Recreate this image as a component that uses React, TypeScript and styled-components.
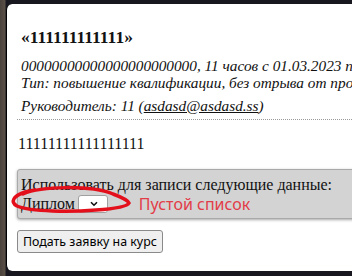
import React from "react";
import styled, { createGlobalStyle } from "styled-components";

const GlobalStyle = createGlobalStyle`
  html, body {
    margin: 0;
    width: 352px;
    height: 276px;
    overflow: hidden;
    background: #18171f;
  }
  body {
    font-family: "Liberation Serif", "Times New Roman", serif;
    color: #111;
  }
`;

const Backdrop = styled.div`
  height: 276px;
  padding: 4px 0 0 6px;
  box-sizing: border-box;
  background: linear-gradient(90deg, #4a423c 0, #5a5048 5px, transparent 6px), #18171f;
`;

const Modal = styled.div`
  width: 380px;
  height: 267px;
  box-sizing: border-box;
  padding: 22px 0 0 10px;
  background: #fff;
  border-left: 1px solid #000;
  border-radius: 6px;
  overflow: hidden;
`;

const Title = styled.h3`
  margin: 0 0 9px 4px;
  font-size: 17.5px;
  line-height: 22px;
  font-weight: bold;
`;

const Info = styled.div`
  padding: 0 0 5px 4px;
  border-bottom: 1px dotted #9a9a9a;
  font-style: italic;
  font-size: 15.3px;
  line-height: 17px;
  white-space: nowrap;
`;

const InfoLine = styled.div<{ $gap?: number }>`
  margin-top: ${(p) => p.$gap ?? 0}px;
`;

const Mail = styled.a`
  color: inherit;
  text-decoration: underline;
`;

const Description = styled.p`
  margin: 15px 0 16px 1px;
  font-size: 16px;
  line-height: 18px;
`;

const DataBox = styled.div`
  position: relative;
  padding: 6px 0 5px 3px;
  background: #d3d3d3;
  border: 1px solid #a9a9a9;
  border-radius: 3px;
  box-shadow: 0 1px 3px rgba(0, 0, 0, 0.35);
  font-size: 16px;
  line-height: 18px;
`;

const Row = styled.div`
  display: flex;
  align-items: center;
  gap: 3px;
  height: 19px;
`;

const SelectWrap = styled.span`
  position: relative;
  display: inline-block;
  width: 30px;
  height: 18px;
`;

const Select = styled.select`
  appearance: none;
  display: block;
  width: 100%;
  height: 100%;
  margin: 0;
  box-sizing: border-box;
  border: 1px solid #a0a0a0;
  border-radius: 3px;
  background: #fff;
`;

const Chevron = styled.svg`
  position: absolute;
  left: 12px;
  top: 6px;
  pointer-events: none;
`;

const Note = styled.span`
  margin-left: 28px;
  font-family: "Noto Sans", "Open Sans", sans-serif;
  font-size: 16px;
  color: #e23c48;
`;

const Scribble = styled.svg`
  position: absolute;
  left: -9px;
  top: 14px;
  pointer-events: none;
`;

const Submit = styled.button`
  margin-top: 11px;
  height: 23px;
  padding: 0 5px;
  font-family: "Noto Sans", "Open Sans", sans-serif;
  font-size: 12.4px;
  color: #000;
  background: #efefef;
  border: 1px solid #8a8a8a;
  border-radius: 3px;
`;

export default function App() {
  return (
    <>
      <GlobalStyle />
      <Backdrop>
        <Modal>
          <Title>«111111111111»</Title>
          <Info>
            <InfoLine>00000000000000000000000, 11 часов с 01.03.2023 по</InfoLine>
            <InfoLine>Тип: повышение квалификации, без отрыва от производства</InfoLine>
            <InfoLine $gap={6}>
              Руководитель: 11 (<Mail href="#">asdasd@asdasd.ss</Mail>)
            </InfoLine>
          </Info>
          <Description>11111111111111111</Description>
          <DataBox>
            Использовать для записи следующие данные:
            <Row>
              Диплом
              <SelectWrap>
                <Select />
                <Chevron width="8" height="6" viewBox="0 0 8 6">
                  <path d="M1 1.2 L4 4.2 L7 1.2" fill="none" stroke="#111" strokeWidth="1.6" />
                </Chevron>
              </SelectWrap>
              <Note>Пустой список</Note>
            </Row>
            <Scribble width="124" height="34" viewBox="8 184 124 34">
              <path
                d="M 22 194 C 40 186, 90 185, 112 194 C 120 197, 127 200, 128 203 C 126 207, 110 209, 95 210 C 70 212, 30 212, 16 206 C 9 202, 12 196, 24 192 L 34 190"
                fill="none"
                stroke="#e3101c"
                strokeWidth="3.5"
                strokeLinecap="round"
              />
            </Scribble>
          </DataBox>
          <Submit>Подать заявку на курс</Submit>
        </Modal>
      </Backdrop>
    </>
  );
}
